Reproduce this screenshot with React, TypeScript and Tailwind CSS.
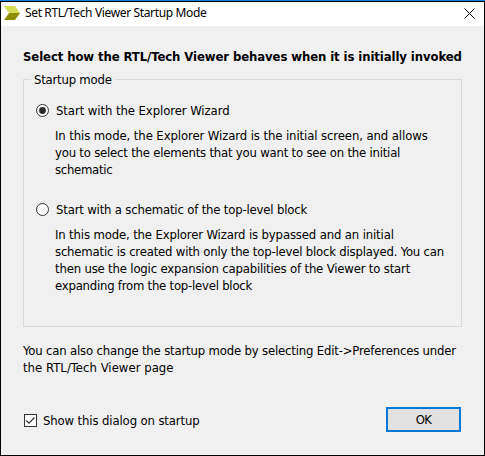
type LineProps = { text: string; tracking: string };

function Line({ text, tracking }: LineProps) {
  return <span className={`block whitespace-nowrap ${tracking}`}>{text}</span>;
}

type ModeProps = {
  label: LineProps;
  checked?: boolean;
  description: LineProps[];
};

function Mode({ label, checked = false, description }: ModeProps) {
  return (
    <div>
      <label className="flex h-[17px] items-center gap-[7px]">
        <svg className="h-[13px] w-[13px] shrink-0" viewBox="0 0 13 13">
          <circle cx="6.5" cy="6.5" r="6" fill="#fff" stroke="#333" />
          {checked && <circle cx="6.5" cy="6.5" r="3.4" fill="#2b2b2b" />}
        </svg>
        <Line {...label} />
      </label>
      <div className="mt-2 pl-[19px]">
        {description.map((line) => (
          <Line key={line.text} {...line} />
        ))}
      </div>
    </div>
  );
}

export default function App() {
  return (
    <div className="flex h-[456px] w-[485px] flex-col border-t border-[#1880d8] bg-[#f0f0f0] text-black">
      <div className="flex flex-1 flex-col border border-black font-['DejaVu_Sans_Condensed','DejaVu_Sans',sans-serif] text-[13px] leading-[17px]">
        <header className="flex h-6 items-center bg-white pr-[9px] pb-0.5 pl-[3px]">
          <svg className="h-[14px] w-4 shrink-0" viewBox="0 0 16 14">
            <path d="M0 0h11l5 7H5z" fill="#d5db52" />
            <path d="M5 7h11l-5 7H0z" fill="#8d8d08" />
          </svg>
          <h1 className="ml-[5px] flex-1 font-['Noto_Sans',sans-serif] text-xs tracking-[-0.36px] whitespace-nowrap">
            Set RTL/Tech Viewer Startup Mode
          </h1>
          <svg className="h-[11px] w-[11px]" viewBox="0 0 11 11" stroke="#000" strokeWidth="1">
            <path d="M.5 .5l10 10M10.5 .5l-10 10" />
          </svg>
        </header>

        <main className="flex flex-1 flex-col px-[22px] pt-[22px]">
          <h2 className="font-bold tracking-[-0.1px] whitespace-nowrap">
            Select how the RTL/Tech Viewer behaves when it is initially invoked
          </h2>

          <fieldset className="mt-1.5 h-64 border border-[#dadada] px-3">
            <legend className="-ml-[5px] px-[3px] tracking-[-0.22px]">Startup mode</legend>
            <div className="flex flex-col gap-[23px] pt-[14px]">
              <Mode
                checked
                label={{ text: "Start with the Explorer Wizard", tracking: "tracking-[-0.08px]" }}
                description={[
                  {
                    text: "In this mode, the Explorer Wizard is the initial screen, and allows",
                    tracking: "tracking-[-0.1px]",
                  },
                  {
                    text: "you to select the elements that you want to see on the initial",
                    tracking: "tracking-[-0.21px]",
                  },
                  { text: "schematic", tracking: "tracking-[-0.3px]" },
                ]}
              />
              <Mode
                label={{
                  text: "Start with a schematic of the top-level block",
                  tracking: "tracking-[-0.18px]",
                }}
                description={[
                  {
                    text: "In this mode, the Explorer Wizard is bypassed and an initial",
                    tracking: "tracking-[-0.15px]",
                  },
                  {
                    text: "schematic is created with only the top-level block displayed. You can",
                    tracking: "tracking-[-0.2px]",
                  },
                  {
                    text: "then use the logic expansion capabilities of the Viewer to start",
                    tracking: "tracking-[-0.18px]",
                  },
                  {
                    text: "expanding from the top-level block",
                    tracking: "tracking-[-0.23px]",
                  },
                ]}
              />
            </div>
          </fieldset>

          <div className="mt-[15px]">
            <Line
              text="You can also change the startup mode by selecting Edit->Preferences under"
              tracking="tracking-[-0.18px]"
            />
            <Line text="the RTL/Tech Viewer page" tracking="tracking-[0.02px]" />
          </div>

          <footer className="mt-[30px] flex h-7 items-center justify-between pr-px">
            <label className="flex items-center gap-[6px] pl-px">
              <svg className="h-[13px] w-[13px] shrink-0" viewBox="0 0 13 13" fill="none">
                <rect x=".5" y=".5" width="12" height="12" fill="#fff" stroke="#333" />
                <path d="M2.3 6.5l2.7 2.7 5.5-5.7" stroke="#333" strokeWidth="1.2" />
              </svg>
              <Line text="Show this dialog on startup" tracking="tracking-[-0.13px]" />
            </label>
            <button className="mb-px flex h-[25px] w-[75px] items-center justify-center border-2 border-[#0078d7] bg-[#e1e1e1] tracking-[-0.8px]">
              OK
            </button>
          </footer>
        </main>
      </div>
    </div>
  );
}
